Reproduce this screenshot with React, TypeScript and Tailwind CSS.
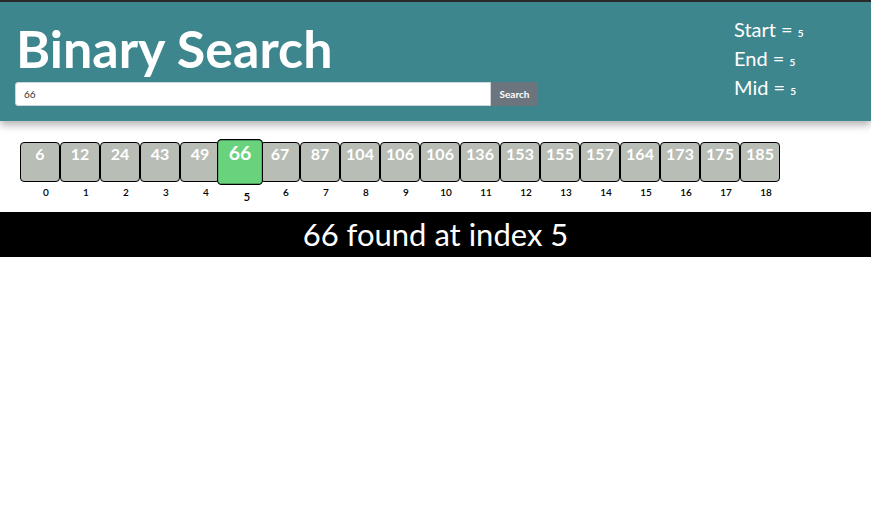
const values = [6, 12, 24, 43, 49, 66, 67, 87, 104, 106, 106, 136, 153, 155, 157, 164, 173, 175, 185];
const found = 5;

const font = { fontFamily: 'Lato, "Open Sans", sans-serif' };

export default function App() {
  return (
    <div className="min-h-screen bg-white" style={font}>
      <div className="h-[2px] bg-[#2b2b2b]" />
      <header className="flex bg-[#3e868e] h-[119px] shadow-[0_4px_8px_rgba(0,0,0,0.3)]">
        <div className="w-[700px] pl-[15px]">
          <h1 className="text-[52px] font-bold text-white leading-none pt-[20px] pl-[1px]">
            Binary Search
          </h1>
          <div className="flex mt-[8px]">
            <input
              defaultValue="66"
              className="w-[476px] h-[24px] bg-white border border-[#ced4da] rounded-l-[3px] px-[8px] text-[10px] text-[#333]"
            />
            <button className="w-[47px] h-[24px] bg-[#6c757d] text-white text-[10px] font-bold rounded-r-[3px]">
              Search
            </button>
          </div>
        </div>
        <div className="pl-[34px] pt-[13px] text-white text-[20px]">
          <div className="h-[29px] leading-[29px]">
            Start = <span className="text-[10px] font-bold leading-none">5</span>
          </div>
          <div className="h-[29px] leading-[29px]">
            End = <span className="text-[10px] font-bold leading-none">5</span>
          </div>
          <div className="h-[29px] leading-[29px]">
            Mid = <span className="text-[10px] font-bold leading-none">5</span>
          </div>
        </div>
      </header>
      <div className="flex pl-[20px] pt-[21px] h-[91px]">
        {values.map((v, i) => (
          <div
            key={i}
            className={
              i === found
                ? "w-[40px] shrink-0 scale-[1.15] origin-[50%_20px] z-10"
                : "w-[40px] shrink-0"
            }
          >
            <div
              className={
                i === found
                  ? "h-[40px] border border-black rounded-[4px] bg-[#68d27d] text-white text-[17px] font-bold text-center leading-none pt-[2px]"
                  : "h-[40px] border border-black rounded-[4px] bg-[#b8bdb5] text-white text-[16px] font-bold text-center leading-none pt-[3px]"
              }
            >
              {v}
            </div>
            <div className="text-[10px] font-semibold text-black text-center pl-[12px] mt-[5px] leading-none">{i}</div>
          </div>
        ))}
      </div>
      <div className="bg-black h-[45px] flex items-center justify-center text-white text-[31px]">
        66 found at index 5
      </div>
    </div>
  );
}
